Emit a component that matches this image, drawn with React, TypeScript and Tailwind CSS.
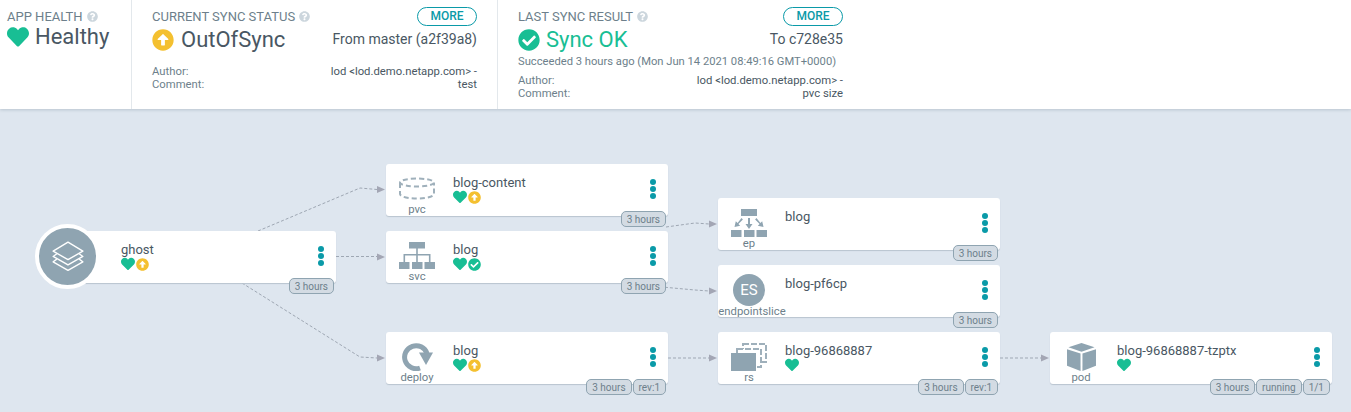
import type { ReactNode } from "react";
import { FaArrowAltCircleUp, FaCheckCircle, FaHeart, FaQuestionCircle } from "react-icons/fa";

interface NodeInfo {
  name: string;
  kind: string;
  pos: string;
  icon: ReactNode;
  status: ("health" | "out" | "ok")[];
  badges: string[];
}

const SvcIcon = () => (
  <svg width="36" height="27" viewBox="0 0 36 27" fill="#8fa4b1">
    <rect x="10" y="0" width="16" height="6.500" />
    <rect x="0" y="20" width="10.500" height="7" />
    <rect x="13" y="20" width="10.500" height="7" />
    <rect x="25.500" y="20" width="10.500" height="7" />
    <path d="M17.200 6h1.600v6H31.500v8h-1.600v-6.400H18.800V20h-1.600v-6.400H6.100V20H4.500v-8h12.700z" />
  </svg>
);

const EpIcon = () => (
  <svg width="36" height="28" viewBox="0 0 36 28" fill="#8fa4b1">
    <rect x="10" y="0" width="16" height="7" />
    <rect x="0" y="21" width="10.500" height="7" />
    <rect x="13" y="21" width="10.500" height="7" />
    <rect x="25.500" y="21" width="10.500" height="7" />
    <path d="M17 9h2v6h2.500l-3.500 5-3.500-5H17z" />
    <path d="M10.500 9l1.400 1.400-4.500 4.500 1.800 1.800-5.700 1.300 1.300-5.700 1.800 1.800z" />
    <path d="M25.500 9l-1.400 1.400 4.500 4.500-1.800 1.800 5.700 1.300-1.300-5.700-1.800 1.800z" />
  </svg>
);

const PvcIcon = () => (
  <svg width="38" height="23" viewBox="0 0 38 23" fill="none" stroke="#9fb0bb" strokeWidth="2" strokeDasharray="5 3">
    <ellipse cx="19" cy="5.500" rx="17" ry="4" />
    <path d="M2 6v11c0 2.500 7.500 4.500 17 4.500s17-2 17-4.500V6" />
  </svg>
);

const DeployIcon = () => (
  <svg width="31" height="28" viewBox="0 0 31 28" fill="none">
    <path d="M18 25A11.500 11.500 0 1 1 25 10.500" stroke="#8fa4b1" strokeWidth="5" />
    <path d="M17 9.500h14l-7 12.500z" fill="#8fa4b1" />
  </svg>
);

const RsIcon = () => (
  <svg width="36" height="28" viewBox="0 0 36 28" stroke="#9fb0bb" strokeWidth="2" strokeDasharray="6 2">
    <rect x="12" y="1" width="23" height="18" fill="white" />
    <rect x="6" y="6" width="24" height="18" fill="white" />
    <rect x="0" y="10" width="25" height="18" fill="#8fa4b1" stroke="none" />
  </svg>
);

const PodIcon = () => (
  <svg width="29" height="28" viewBox="0 0 30 29" fill="#8fa4b1">
    <path d="M15 0l13.500 4.500L15 9 1.500 4.500z" />
    <path d="M0 6.500L14 11v18L0 23.500z" />
    <path d="M30 6.500L16 11v18l14-5.500z" />
  </svg>
);

const EsIcon = () => (
  <div className="flex h-8 w-8 items-center justify-center rounded-full bg-[#8fa4b1] text-[15px] text-white">ES</div>
);

const NODES: NodeInfo[] = [
  { name: "ghost", kind: "", pos: "left-[54px] top-[122px]", icon: null, status: ["health", "out"], badges: ["3 hours"] },
  { name: "blog-content", kind: "pvc", pos: "left-[386px] top-[55px]", icon: <PvcIcon />, status: ["health", "out"], badges: ["3 hours"] },
  { name: "blog", kind: "svc", pos: "left-[386px] top-[122px]", icon: <SvcIcon />, status: ["health", "ok"], badges: ["3 hours"] },
  { name: "blog", kind: "deploy", pos: "left-[386px] top-[223px]", icon: <DeployIcon />, status: ["health", "out"], badges: ["3 hours", "rev:1"] },
  { name: "blog", kind: "ep", pos: "left-[718px] top-[89px]", icon: <EpIcon />, status: [], badges: ["3 hours"] },
  { name: "blog-pf6cp", kind: "endpointslice", pos: "left-[718px] top-[156px]", icon: <EsIcon />, status: [], badges: ["3 hours"] },
  { name: "blog-96868887", kind: "rs", pos: "left-[718px] top-[223px]", icon: <RsIcon />, status: ["health"], badges: ["3 hours", "rev:1"] },
  { name: "blog-96868887-tzptx", kind: "pod", pos: "left-[1050px] top-[223px]", icon: <PodIcon />, status: ["health"], badges: ["3 hours", "running", "1/1"] },
];

// line, then the tip of the arrow head (x, y)
const EDGES: { d: string; x: number; y: number }[] = [
  { d: "M258 122L360 79L377 80.500", x: 377, y: 80.5 },
  { d: "M336 147.500L377 147.500", x: 377, y: 148 },
  { d: "M242 174L360 248L377 249", x: 377, y: 249 },
  { d: "M666 118L695 114L709 115", x: 709, y: 115 },
  { d: "M640 176L695 181L709 182", x: 709, y: 182 },
  { d: "M668 249L709 249", x: 709, y: 249 },
  { d: "M1000 249L1041 249", x: 1041, y: 249 },
];

function StatusIcon({ type }: { type: string }) {
  if (type === "health") return <FaHeart className="text-[14px] text-[#18be94]" />;
  if (type === "out") return <FaArrowAltCircleUp className="text-[13px] text-[#f4c030]" />;
  return <FaCheckCircle className="text-[13px] text-[#18be94]" />;
}

function GraphNode({ node }: { node: NodeInfo }) {
  return (
    <div className={`absolute h-[52px] w-[282px] rounded-[3px] bg-white shadow-[0_1px_1px_#b9c4cf] ${node.pos}`}>
      {node.kind && (
        <div className="absolute left-0 top-0 flex h-[53px] w-[62px] flex-col items-center justify-between pt-[10px]">
          <div className="flex h-[30px] items-center">{node.icon}</div>
          <div
            className={`whitespace-nowrap text-[11.3px] leading-[14px] text-[#6d7f8b] ${
              node.kind === "endpointslice" ? "ml-[6px]" : ""
            }`}
          >
            {node.kind}
          </div>
        </div>
      )}
      <div className="absolute left-[67px] top-[11px] text-[13px] leading-[16px] text-[#495763]">{node.name}</div>
      <div className="absolute left-[67px] top-[26px] flex items-center gap-[1px]">
        {node.status.map((s, i) => (
          <StatusIcon key={i} type={s} />
        ))}
      </div>
      <div className="absolute right-[12px] top-[15px] flex flex-col gap-[1px]">
        <span className="h-[6px] w-[6px] rounded-full bg-[#0a9aa8]" />
        <span className="h-[6px] w-[6px] rounded-full bg-[#0a9aa8]" />
        <span className="h-[6px] w-[6px] rounded-full bg-[#0a9aa8]" />
      </div>
      <div className="absolute -bottom-[11px] right-[2px] flex gap-[1px]">
        {node.badges.map((b, i) => (
          <span
            key={i}
            className="flex h-[16px] items-center rounded-[5px] border border-[#8fa4b1] bg-[#d3dbe3] px-[5px] text-[10px] text-[#6d7f8b]"
          >
            {b}
          </span>
        ))}
      </div>
    </div>
  );
}

function Help() {
  return <FaQuestionCircle className="ml-[4px] text-[11px] text-[#ccd6dd]" />;
}

function MoreButton() {
  return (
    <button className="h-[19px] w-[60px] rounded-full border border-[#0a9aa8] text-[12px] font-medium leading-[17px] text-[#0a9aa8]">
      MORE
    </button>
  );
}

function SyncPanel(props: {
  title: string;
  status: ReactNode;
  detail: string;
  extra?: string;
  comment: string;
  className: string;
}) {
  return (
    <div className={props.className}>
      <div className="flex w-[325px] flex-col">
        <div className="flex h-[19px] items-center justify-between">
          <div className="flex items-center text-[13px] text-[#6d7f8b]">
            {props.title}
            <Help />
          </div>
          <MoreButton />
        </div>
        <div className="mt-[1px] flex h-[25px] items-center justify-between">
          {props.status}
          <span className="text-[14px] text-[#495763]">{props.detail}</span>
        </div>
        {props.extra ? (
          <div className="mt-[3px] whitespace-nowrap text-[11.2px] leading-[14px] text-[#6d7f8b]">{props.extra}</div>
        ) : null}
        <div className={`flex justify-between text-[11.3px] leading-[13px] ${props.extra ? "mt-[5px]" : "mt-[13px]"}`}>
          <div className="text-[#6d7f8b]">
            <div>Author:</div>
            <div>Comment:</div>
          </div>
          <div className="text-right text-[#495763]">
            <div>lod &lt;lod.demo.netapp.com&gt; -</div>
            <div>{props.comment}</div>
          </div>
        </div>
      </div>
    </div>
  );
}

export default function App() {
  return (
    <div className="h-[412px] w-[1351px] overflow-hidden bg-[#dee6ef] font-['Roboto',sans-serif]">
      {/* Status header */}
      <div className="relative z-10 flex h-[109px] bg-white shadow-[0_1px_3px_#b9c4cf]">
        <div className="w-[132px] border-r border-[#e3e8ec] pl-[7px] pt-[7px]">
          <div className="flex h-[19px] items-center text-[13px] text-[#6d7f8b]">
            APP HEALTH
            <Help />
          </div>
          <div className="-mt-[2px] flex h-[25px] items-center gap-[6px] text-[22px] text-[#495763]">
            <FaHeart className="text-[22px] text-[#18be94]" />
            Healthy
          </div>
        </div>
        <SyncPanel
          className="w-[366px] border-r border-[#e3e8ec] pl-[20px] pt-[7px]"
          title="CURRENT SYNC STATUS"
          status={
            <div className="flex items-center gap-[7px] text-[22px] text-[#495763]">
              <FaArrowAltCircleUp className="text-[22px] text-[#f4c030]" />
              OutOfSync
            </div>
          }
          detail="From master (a2f39a8)"
          comment="test"
        />
        <SyncPanel
          className="pl-[20px] pt-[7px]"
          title="LAST SYNC RESULT"
          status={
            <div className="flex items-center gap-[6px] text-[22px] text-[#18be94]">
              <FaCheckCircle className="text-[22px]" />
              Sync OK
            </div>
          }
          detail="To c728e35"
          extra="Succeeded 3 hours ago (Mon Jun 14 2021 08:49:16 GMT+0000)"
          comment="pvc size"
        />
      </div>

      {/* Resource graph */}
      <div className="relative h-[303px]">
        <svg className="absolute left-0 top-0" width="1351" height="303" fill="none">
          {EDGES.map((e, i) => (
            <g key={i}>
              <path d={e.d} stroke="#9ea7b3" strokeWidth="1" strokeDasharray="3 2" />
              <path d="M0 -3.500L8 0L0 3.500z" fill="#a3a6b4" transform={`translate(${e.x} ${e.y})`} />
            </g>
          ))}
        </svg>
        {NODES.map((n, i) => (
          <GraphNode key={i} node={n} />
        ))}
        {/* ghost application badge circle, overlaps its card */}
        <div className="absolute left-[35px] top-[115px] flex h-[65px] w-[65px] items-center justify-center rounded-full border-4 border-white bg-[#8fa4b1]">
          <svg width="34" height="32" viewBox="0 0 32 30" fill="none" stroke="white" strokeWidth="1.300" strokeLinejoin="round">
            <path d="M16 1L30 9.500L16 17.500L2 9.500z" />
            <path d="M5.500 12L2 14.500L16 22.500L30 14.500L26.500 12" />
            <path d="M5.500 17L2 19.500L16 27.500L30 19.500L26.500 17" />
          </svg>
        </div>
      </div>
    </div>
  );
}
